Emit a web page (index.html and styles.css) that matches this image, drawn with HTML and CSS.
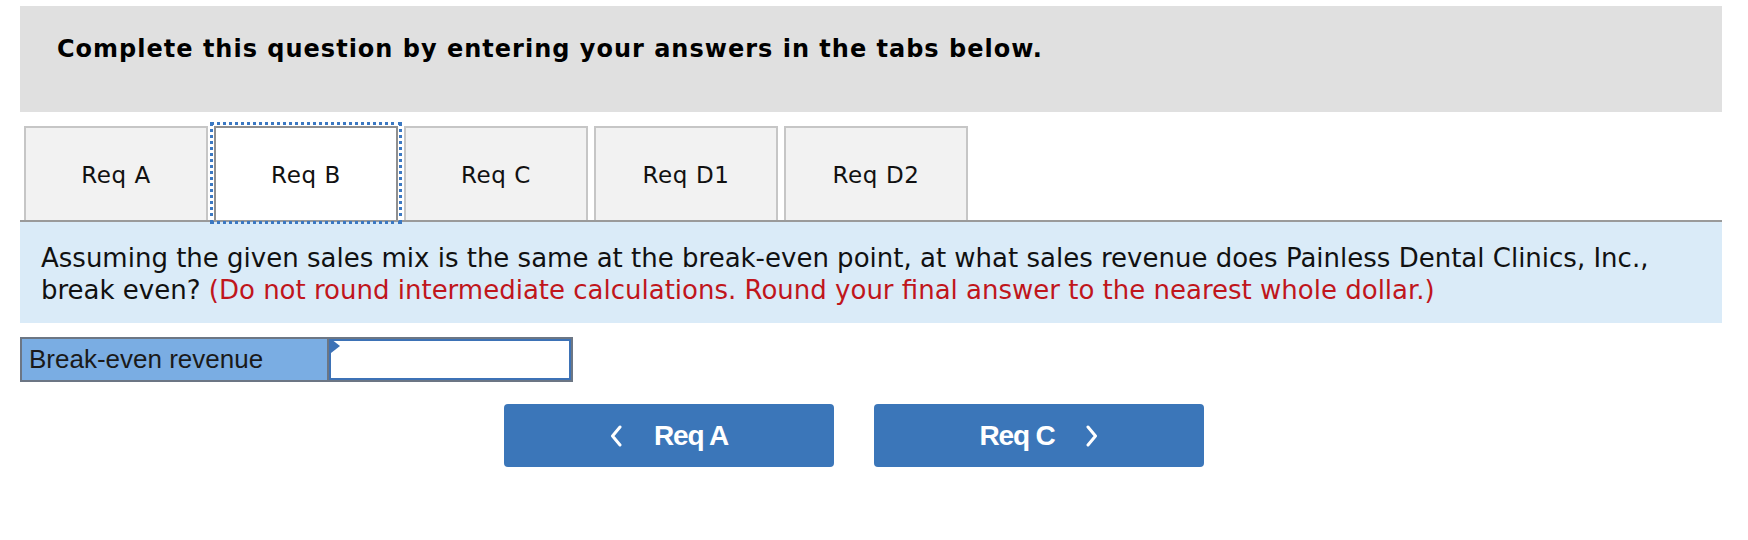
FILE: index.html
```html
<!DOCTYPE html>
<html>
<head>
<meta charset="utf-8">
<link rel="stylesheet" href="styles.css">
</head>
<body>
<div class="page">
  <div class="header">Complete this question by entering your answers in the tabs below.</div>
  <div class="tabs">
    <div class="tab">Req A</div>
    <div class="tab active">Req B</div>
    <div class="tab">Req C</div>
    <div class="tab">Req D1</div>
    <div class="tab">Req D2</div>
  </div>
  <div class="question">Assuming the given sales mix is the same at the break-even point, at what sales revenue does Painless Dental Clinics, Inc., break even? <span class="note">(Do not round intermediate calculations. Round your final answer to the nearest whole dollar.)</span></div>
  <div class="answer-row">
    <div class="label">Break-even revenue</div>
    <div class="input"><span class="marker"></span></div>
  </div>
  <div class="nav">
    <button class="nav-btn"><svg class="chev" width="12" height="22" viewBox="0 0 12 22"><path d="M10 2 L2.5 11 L10 20" fill="none" stroke="#fff" stroke-width="3" stroke-linecap="round" stroke-linejoin="round"/></svg><span>Req A</span></button>
    <button class="nav-btn"><span>Req C</span><svg class="chev" width="12" height="22" viewBox="0 0 12 22"><path d="M2 2 L9.5 11 L2 20" fill="none" stroke="#fff" stroke-width="3" stroke-linecap="round" stroke-linejoin="round"/></svg></button>
  </div>
</div>
</body>
</html>
```
FILE: styles.css
```css
html, body {
  margin: 0;
  padding: 0;
  background: #fff;
}
.page {
  width: 1702px;
  margin-left: 20px;
  padding-top: 6px;
  font-family: "DejaVu Sans", Verdana, sans-serif;
  color: #111;
}
.header {
  background: #e0e0e0;
  height: 106px;
  box-sizing: border-box;
  padding: 29px 0 0 37px;
  font-weight: bold;
  font-size: 24px;
  letter-spacing: 1px;
  color: #000;
}
.tabs {
  display: flex;
  gap: 6px;
  margin-top: 14px;
  padding-left: 4px;
  border-bottom: 2px solid #9a9a9a;
}
.tab {
  width: 184px;
  height: 94px;
  box-sizing: border-box;
  background: #f2f2f2;
  border: 2px solid #c6c6c6;
  border-bottom: none;
  display: flex;
  align-items: center;
  justify-content: center;
  padding-top: 2px;
  font-size: 23px;
  letter-spacing: 0.6px;
  color: #111;
}
.tab.active {
  background: #fff;
  border-color: #8f8f8f;
  outline: 3px dotted #3b78c2;
  outline-offset: 1px;
}
.question {
  background: #daebf8;
  height: 101px;
  box-sizing: border-box;
  padding: 20px 40px 0 21px;
  font-size: 26px;
  line-height: 32px;
  color: #111;
}
.note {
  color: #c0161c;
}
.answer-row {
  display: flex;
  margin-top: 14px;
  height: 45px;
}
.label {
  width: 307px;
  box-sizing: border-box;
  background: #7aade3;
  border: 2px solid #6c7684;
  border-right: none;
  font-family: "Liberation Sans", Arial, sans-serif;
  font-size: 26px;
  color: #1a1a1a;
  display: flex;
  align-items: center;
  padding-left: 7px;
}
.input {
  position: relative;
  width: 246px;
  box-sizing: border-box;
  background: #fff;
  border: 2px solid #6c7684;
  box-shadow: inset 0 0 0 2px #3d72b6;
}
.marker {
  position: absolute;
  left: 2px;
  top: 0;
  width: 0;
  height: 0;
  border-top: 7px solid transparent;
  border-bottom: 7px solid transparent;
  border-left: 9px solid #3d72b6;
}
.nav {
  display: flex;
  gap: 40px;
  margin-top: 22px;
  margin-left: 484px;
}
.nav-btn {
  width: 330px;
  height: 63px;
  background: #3b76b9;
  border: none;
  border-radius: 4px;
  color: #fff;
  font-family: "Liberation Sans", Arial, sans-serif;
  font-weight: bold;
  font-size: 28px;
  letter-spacing: -1.2px;
  display: flex;
  align-items: center;
  justify-content: center;
  gap: 32px;
  padding: 0;
}
.chev {
  display: block;
}
```
